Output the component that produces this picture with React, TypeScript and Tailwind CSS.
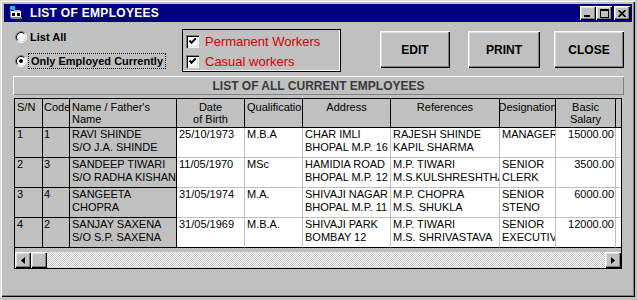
import type { ReactNode } from 'react'

const raised =
  'shadow-[inset_1px_1px_#ffffff,inset_-1px_-1px_#000000,inset_-2px_-2px_#808080,inset_2px_2px_#dfdfdf]'

type Col = {
  w: number
  fixed?: boolean
  head: string[]
  headAlign: 'left' | 'center'
  dataAlign?: 'left' | 'right'
  pl?: number
}

const cols: Col[] = [
  { w: 28, fixed: true, head: ['S/N'], headAlign: 'left' },
  { w: 27, fixed: true, head: ['Code'], headAlign: 'left', pl: 1 },
  { w: 107, fixed: true, head: ["Name / Father's", 'Name'], headAlign: 'left' },
  { w: 68, head: ['Date', 'of Birth'], headAlign: 'center' },
  { w: 58, head: ['Qualification'], headAlign: 'left' },
  { w: 88, head: ['Address'], headAlign: 'center' },
  { w: 109, head: ['References'], headAlign: 'center' },
  { w: 56, head: ['Designation'], headAlign: 'center' },
  { w: 60, head: ['Basic', 'Salary'], headAlign: 'center', dataAlign: 'right' },
]

const rows: string[][][] = [
  [['1'], ['1'], ['RAVI SHINDE', 'S/O J.A. SHINDE'], ['25/10/1973'], ['M.B.A'], ['CHAR IMLI', 'BHOPAL M.P. 16'], ['RAJESH SHINDE', 'KAPIL SHARMA'], ['MANAGER'], ['15000.00']],
  [['2'], ['3'], ['SANDEEP TIWARI', 'S/O RADHA KISHAN'], ['11/05/1970'], ['MSc'], ['HAMIDIA ROAD', 'BHOPAL M.P. 12'], ['M.P. TIWARI', 'M.S.KULSHRESHTHA'], ['SENIOR', 'CLERK'], ['3500.00']],
  [['3'], ['4'], ['SANGEETA', 'CHOPRA'], ['31/05/1974'], ['M.A.'], ['SHIVAJI NAGAR', 'BHOPAL M.P. 11'], ['M.P. CHOPRA', 'M.S. SHUKLA'], ['SENIOR', 'STENO'], ['6000.00']],
  [['4'], ['2'], ['SANJAY SAXENA', 'S/O S.P. SAXENA'], ['31/05/1969'], ['M.B.A.'], ['SHIVAJI PARK', 'BOMBAY 12'], ['M.P. TIWARI', 'M.S. SHRIVASTAVA'], ['SENIOR', 'EXECUTIVE'], ['12000.00']],
]

function TitleButton({ children }: { children: ReactNode }) {
  return (
    <div className={`w-[16px] h-[14px] bg-[#c0c0c0] flex items-center justify-center ${raised}`}>
      {children}
    </div>
  )
}

function Radio({ checked }: { checked?: boolean }) {
  return (
    <svg width="12" height="12" viewBox="0 0 12 12" className="flex-none">
      <circle cx="6" cy="6" r="4.5" fill="#ffffff" />
      <path d="M2.11 9.89 A5.5 5.5 0 0 1 9.89 2.11" stroke="#808080" fill="none" />
      <path d="M9.89 2.11 A5.5 5.5 0 0 1 2.11 9.89" stroke="#ffffff" fill="none" />
      <path d="M2.82 9.18 A4.5 4.5 0 0 1 9.18 2.82" stroke="#000000" fill="none" />
      <path d="M9.18 2.82 A4.5 4.5 0 0 1 2.82 9.18" stroke="#dfdfdf" fill="none" />
      {checked && <circle cx="6" cy="6" r="2" fill="#000000" />}
    </svg>
  )
}

function Check({ label }: { label: string }) {
  return (
    <div className="flex items-center h-[16px]">
      <div className="w-[13px] h-[13px] bg-white flex-none flex items-center justify-center shadow-[inset_1px_1px_#808080,inset_2px_2px_#000000,inset_-1px_-1px_#ffffff,inset_-2px_-2px_#dfdfdf]">
        <svg width="9" height="9" viewBox="0 0 9 9">
          <path d="M1.5 3.5 L3.5 5.8 L7.8 1.4" stroke="#000" strokeWidth="2" fill="none" />
        </svg>
      </div>
      <span className="ml-[6px] text-[13px] leading-none text-[#d40000] whitespace-nowrap">{label}</span>
    </div>
  )
}

function Button({ label, w, ml }: { label: string; w: string; ml: string }) {
  return (
    <button className={`${w} ${ml} h-[37px] mt-[9px] bg-[#c0c0c0] text-[12px] font-bold text-black ${raised}`}>
      {label}
    </button>
  )
}

function Arrow({ dir }: { dir: 'left' | 'right' }) {
  return (
    <div className={`w-[16px] h-[16px] flex-none bg-[#c0c0c0] flex items-center justify-center ${raised}`}>
      <svg width="4" height="7" viewBox="0 0 4 7">
        {dir === 'left' ? <path d="M4 0 L0 3.5 L4 7 Z" fill="#000" /> : <path d="M0 0 L4 3.5 L0 7 Z" fill="#000" />}
      </svg>
    </div>
  )
}

export default function App() {
  return (
    <div className="w-[637px] h-[300px] bg-[#c0c0c0] font-['Liberation_Sans',Arial,sans-serif] text-black overflow-hidden">
      <div className="w-[635px] h-[297px] flex flex-col pl-[4px] pr-[3px] pt-[4px] shadow-[inset_1px_1px_#dfdfdf,inset_2px_2px_#ffffff,inset_-1px_-1px_#000000,inset_-2px_-2px_#808080]">
        {/* title bar */}
        <div className="h-[18px] bg-[#000080] flex items-center pr-[2px]">
          <svg width="16" height="16" viewBox="0 0 16 16" className="ml-[4px] flex-none">
            <rect x="2" y="1" width="5" height="4" fill="#00c0ff" />
            <rect x="2" y="1" width="1" height="12" fill="#808080" />
            <rect x="3" y="6" width="10" height="6" fill="#ffffff" />
            <rect x="6" y="5" width="6" height="2" fill="#c0c0c0" />
            <rect x="3" y="12" width="11" height="2" fill="#808080" />
            <rect x="4" y="8" width="3" height="3" fill="#000000" />
            <rect x="9" y="8" width="3" height="3" fill="#000000" />
          </svg>
          <span className="ml-[6px] text-[12px] font-bold text-white tracking-[0.3px] whitespace-nowrap">LIST OF EMPLOYEES</span>
          <div className="ml-auto flex items-center">
            <TitleButton>
              <div className="w-[6px] h-[2px] bg-black mt-[6px] mr-[2px]" />
            </TitleButton>
            <TitleButton>
              <div className="w-[9px] h-[9px] border border-black border-t-2" />
            </TitleButton>
            <div className="w-[2px]" />
            <TitleButton>
              <svg width="8" height="7" viewBox="0 0 8 7">
                <path d="M0.5 0 L7.5 7 M7.5 0 L0.5 7" stroke="#000" strokeWidth="1.6" />
              </svg>
            </TitleButton>
          </div>
        </div>

        {/* controls */}
        <div className="h-[54px] flex items-start">
          <div className="w-[178px] pl-[11px] pt-[7px] flex flex-col gap-[8px]">
            <div className="h-[16px] flex items-center">
              <Radio />
              <span className="ml-[3px] text-[11px] font-bold leading-none">List All</span>
            </div>
            <div className="h-[16px] flex items-center">
              <Radio checked />
              <span className="ml-[1px] h-[16px] pl-[2px] pr-[2px] flex items-center border border-dotted border-black text-[11px] font-bold leading-none whitespace-nowrap">
                Only Employed Currently
              </span>
            </div>
          </div>
          <div className="mt-[7px] w-[159px] h-[43px] border border-black shadow-[inset_-1px_-1px_#ffffff] pl-[3px] pt-[3px] flex flex-col gap-[4px]">
            <Check label="Permanent Workers" />
            <Check label="Casual workers" />
          </div>
          <Button label="EDIT" w="w-[70px]" ml="ml-[39px]" />
          <Button label="PRINT" w="w-[72px]" ml="ml-[18px]" />
          <Button label="CLOSE" w="w-[70px]" ml="ml-[14px]" />
        </div>

        {/* caption */}
        <div className="ml-[9px] w-[611px] h-[19px] flex items-center justify-center bg-[#c0c0c0] shadow-[inset_1px_1px_#ffffff,inset_-1px_-1px_#808080] text-[12px] font-bold text-[#3a3a3a]">
          LIST OF ALL CURRENT EMPLOYEES
        </div>

        {/* grid */}
        <div className="ml-[10px] mt-[3px] w-[608px] h-[171px] border border-black flex flex-col bg-[#c0c0c0] text-[11px] leading-[13px]">
          <div className="h-[29px] flex flex-none">
            {cols.map((c, i) => (
              <div
                key={i}
                className={`h-full flex-none overflow-hidden border-r border-b border-black pt-[2px] leading-[12px] ${
                  c.headAlign === 'center' ? 'flex flex-col items-center' : c.pl === 1 ? 'pl-[1px]' : 'pl-[2px]'
                }`}
                style={{ width: c.w }}
              >
                {c.head.map((h) => (
                  <div key={h} className="whitespace-nowrap">{h}</div>
                ))}
              </div>
            ))}
            <div className="flex-1 h-full border-b border-black" />
          </div>
          {rows.map((r, ri) => (
            <div key={ri} className="h-[30px] flex flex-none">
              {cols.map((c, i) => (
                <div
                  key={i}
                  className={`h-full flex-none overflow-hidden border-r border-b ${
                    c.fixed ? 'bg-[#c0c0c0] border-black' : 'bg-white border-[#c0c0c0]'
                  } ${ri === rows.length - 1 ? 'border-b-black' : ''} ${
                    c.dataAlign === 'right' ? 'text-right pr-[1px]' : c.pl === 1 ? 'pl-[1px]' : 'pl-[2px]'
                  }`}
                  style={{ width: c.w }}
                >
                  {r[i].map((t) => (
                    <div key={t} className="whitespace-nowrap">{t}</div>
                  ))}
                </div>
              ))}
              <div className={`flex-1 h-full bg-white border-b ${ri === rows.length - 1 ? 'border-black' : 'border-[#c0c0c0]'}`} />
            </div>
          ))}
          <div className="flex-1" />
          <div className="h-[16px] flex flex-none">
            <Arrow dir="left" />
            <div className={`w-[16px] h-[16px] flex-none bg-[#c0c0c0] ${raised}`} />
            <div className="flex-1 bg-[repeating-conic-gradient(#c0c0c0_0_25%,#ffffff_0_50%)] bg-[length:2px_2px]" />
            <Arrow dir="right" />
          </div>
        </div>
      </div>
    </div>
  )
}
